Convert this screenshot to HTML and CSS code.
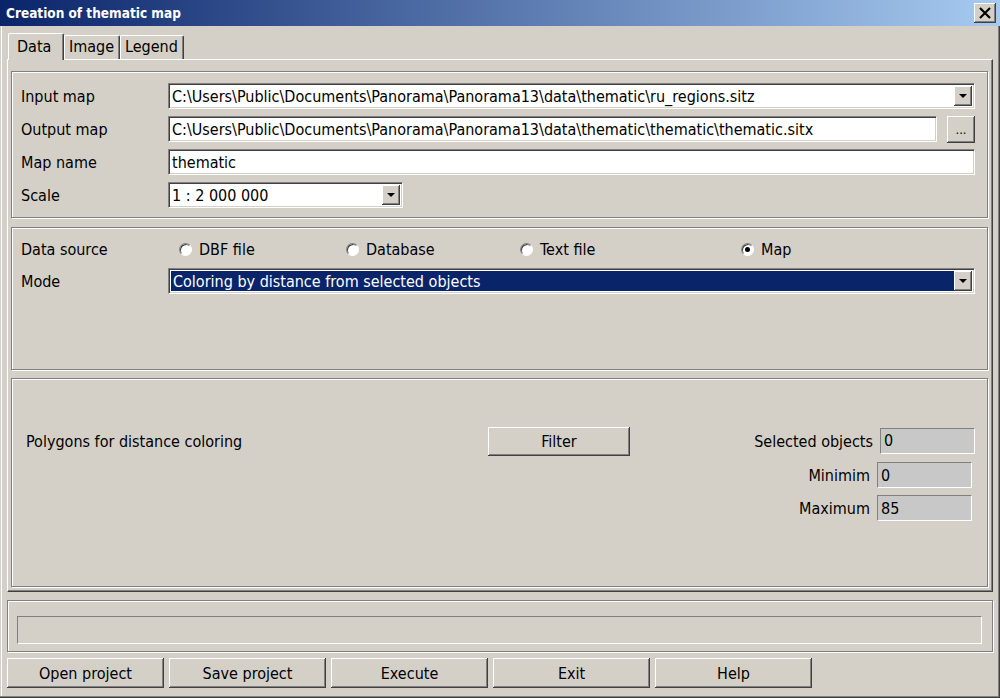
FILE: index.html
```html
<!DOCTYPE html>
<html>
<head>
<meta charset="utf-8">
<link rel="stylesheet" href="styles.css">
</head>
<body>
<div class="window">
  <div class="titlebar">
    <span class="title">Creation of thematic map</span>
    <button class="close"><svg width="14" height="12" viewBox="0 0 14 12"><path d="M2 1 L12 11 M12 1 L2 11" stroke="#000" stroke-width="2.2" fill="none"/></svg></button>
  </div>
  <div class="client">
    <div class="tabs">
      <div class="tab active">Data</div>
      <div class="tab">Image</div>
      <div class="tab">Legend</div>
    </div>
    <div class="panel">
      <div class="group g1">
        <div class="row">
          <span class="lbl">Input map</span>
          <div class="field combo wide"><span class="val">C:\Users\Public\Documents\Panorama\Panorama13\data\thematic\ru_regions.sitz</span><span class="dd"><i class="tri"></i></span></div>
        </div>
        <div class="row">
          <span class="lbl">Output map</span>
          <div class="field outfld"><span class="val">C:\Users\Public\Documents\Panorama\Panorama13\data\thematic\thematic\thematic.sitx</span></div>
          <button class="btn dots">...</button>
        </div>
        <div class="row">
          <span class="lbl">Map name</span>
          <div class="field wide"><span class="val">thematic</span></div>
        </div>
        <div class="row">
          <span class="lbl">Scale</span>
          <div class="field combo scale"><span class="val">1 : 2 000 000</span><span class="dd"><i class="tri"></i></span></div>
        </div>
      </div>
      <div class="group g2">
        <div class="row src">
          <span class="lbl">Data source</span>
          <label class="radio r1"><i class="rb"></i>DBF file</label>
          <label class="radio r2"><i class="rb"></i>Database</label>
          <label class="radio r3"><i class="rb"></i>Text file</label>
          <label class="radio r4"><i class="rb on"></i>Map</label>
        </div>
        <div class="row">
          <span class="lbl">Mode</span>
          <div class="field combo wide sel"><span class="val">Coloring by distance from selected objects</span><span class="dd"><i class="tri"></i></span></div>
        </div>
      </div>
      <div class="group g3">
        <div class="g3row">
          <span class="poly">Polygons for distance coloring</span>
          <button class="btn filter">Filter</button>
          <div class="stat"><span>Selected objects</span><div class="ro">0</div></div>
        </div>
        <div class="stat sub"><span>Minimim</span><div class="ro">0</div></div>
        <div class="stat sub last"><span>Maximum</span><div class="ro">85</div></div>
      </div>
    </div>
    <div class="pgroup"><div class="progress"></div></div>
    <div class="buttons">
      <button class="btn big">Open project</button>
      <button class="btn big">Save project</button>
      <button class="btn big">Execute</button>
      <button class="btn big">Exit</button>
      <button class="btn big">Help</button>
    </div>
  </div>
</div>
</body>
</html>
```
FILE: styles.css
```css
* { box-sizing: border-box; }
html, body { margin: 0; padding: 0; }
body {
  width: 1000px; height: 698px; overflow: hidden;
  font-family: "DejaVu Sans Condensed", "DejaVu Sans", "Liberation Sans", sans-serif;
  font-size: 16px; color: #000;
}
.window {
  width: 1000px; height: 698px;
  background: #d4d0c8;
  display: flex; flex-direction: column;
  box-shadow: inset -1px -1px 0 #404040, inset -2px -2px 0 #808080, inset 1px 0 0 #d4d0c8, inset 2px 0 0 #fff;
}
.titlebar {
  height: 26px; flex: none;
  background: linear-gradient(to right, #0a246a, #a6caf0);
  display: flex; align-items: center; justify-content: space-between;
  padding: 0 4px 0 6px;
}
.title { color: #fff; font-weight: bold; font-size: 13.5px; }
.close {
  width: 22px; height: 20px; padding: 0; margin: 0;
  background: #d4d0c8; border: 0;
  box-shadow: inset -1px -1px 0 #404040, inset 1px 1px 0 #fff, inset -2px -2px 0 #808080;
  display: flex; align-items: center; justify-content: center;
}
.client { flex: 1; padding: 6px 7px 0 7px; display: flex; flex-direction: column; }
.tabs { display: flex; height: 27px; align-items: flex-end; padding-left: 1px; position: relative; z-index: 1; }
.tab {
  height: 24px; padding: 1px 0 0 4px;
  border: 1px solid #fff; border-bottom: 0; border-right: 1px solid #404040;
  box-shadow: inset -1px 0 0 #808080;
  border-radius: 2px 2px 0 0;
  line-height: 20px;
}
.tab.active {
  height: 27px; width: 56px; padding: 3px 0 0 8px;
  background: #d4d0c8; margin-bottom: -1px;
}
.tab:nth-child(2) { width: 56px; }
.tab:nth-child(3) { width: 64px; }
.panel {
  height: 533px; flex: none;
  border: 1px solid #fff; border-right-color: #404040; border-bottom-color: #404040;
  box-shadow: inset -1px -1px 0 #808080;
  padding: 11px 4px 0 3px;
  display: flex; flex-direction: column; gap: 8px;
}
.group {
  border: 1px solid #808080;
  box-shadow: 1px 1px 0 #fff, inset 1px 1px 0 #fff;
}
.g1 { height: 147px; padding: 11px 0 0 9px; display: flex; flex-direction: column; gap: 7px; }
.g2 { height: 143px; margin-top: 1px; padding: 10px 0 0 9px; display: flex; flex-direction: column; gap: 8px; }
.g3 { height: 209px; padding: 48px 0 0 14px; display: flex; flex-direction: column; gap: 6px; }
.row { display: flex; align-items: center; height: 26px; }
.lbl { width: 147px; flex: none; }
.field {
  height: 26px; background: #fff; position: relative;
  border: 1px solid #808080; border-right-color: #fff; border-bottom-color: #fff;
  box-shadow: inset 1px 1px 0 #404040, inset -1px -1px 0 #d4d0c8;
  display: flex; align-items: center; padding: 0 2px 0 3px;
  white-space: nowrap; overflow: hidden;
}
.wide { width: 807px; }
.outfld { width: 769px; }
.scale { width: 235px; }
.combo { padding-right: 22px; }
.dd {
  position: absolute; right: 2px; top: 2px; width: 18px; height: 20px;
  background: #d4d0c8;
  box-shadow: inset -1px -1px 0 #404040, inset 1px 1px 0 #fff, inset -2px -2px 0 #808080;
  display: flex; align-items: center; justify-content: center;
}
.tri { width: 0; height: 0; border-left: 4px solid transparent; border-right: 4px solid transparent; border-top: 4px solid #000; margin-left: -1px; }
.sel .val { background: #0a246a; color: #fff; position: absolute; left: 2px; top: 2px; bottom: 2px; right: 20px; padding-left: 2px; display: flex; align-items: center; }
.btn {
  font: inherit; color: #000; background: #d4d0c8; border: 0; margin: 0; padding: 0;
  box-shadow: inset -1px -1px 0 #404040, inset 1px 1px 0 #fff, inset -2px -2px 0 #808080;
}
.dots { width: 28px; height: 27px; margin-left: 10px; font-size: 13px; line-height: 27px; padding-bottom: 2px; }
.src { height: 22px; position: relative; }
.radio { display: flex; align-items: center; gap: 7px; position: absolute; }
.r1 { left: 158px; }
.r2 { left: 325px; }
.r3 { left: 499px; }
.r4 { left: 720px; }
.rb {
  width: 13px; height: 13px; border-radius: 50%; background: #fff;
  border: 1px solid; border-color: #808080 #fff #fff #808080;
  box-shadow: inset 1px 1px 0 #404040;
  display: flex; align-items: center; justify-content: center;
}
.rb.on::after { content: ""; width: 5px; height: 5px; border-radius: 50%; background: #000; }
.g3row { display: flex; align-items: center; height: 29px; flex: none; }
.poly { width: 462px; flex: none; }
.filter { width: 142px; height: 29px; flex: none; }
.stat { flex: 1; display: flex; align-items: center; justify-content: flex-end; gap: 7px; padding-right: 12px; }
.stat.sub { flex: none; padding-right: 15px; height: 26px; }
.stat.last { margin-top: 1px; }
.ro {
  width: 95px; height: 26px; background: #c8c8c8;
  border: 1px solid #808080; border-right-color: #fff; border-bottom-color: #fff;
  display: flex; align-items: center; padding-left: 3px;
}
.g3row .ro { margin-top: -2px; }
.pgroup {
  height: 52px; margin-top: 8px; flex: none;
  border: 1px solid #808080;
  box-shadow: 1px 1px 0 #fff, inset 1px 1px 0 #fff;
  padding: 15px 10px 0 9px;
}
.progress {
  height: 28px;
  border: 1px solid #808080; border-right-color: #fff; border-bottom-color: #fff;
}
.buttons { display: flex; gap: 5px; margin-top: 6px; }
.big { width: 157px; height: 30px; }
```
